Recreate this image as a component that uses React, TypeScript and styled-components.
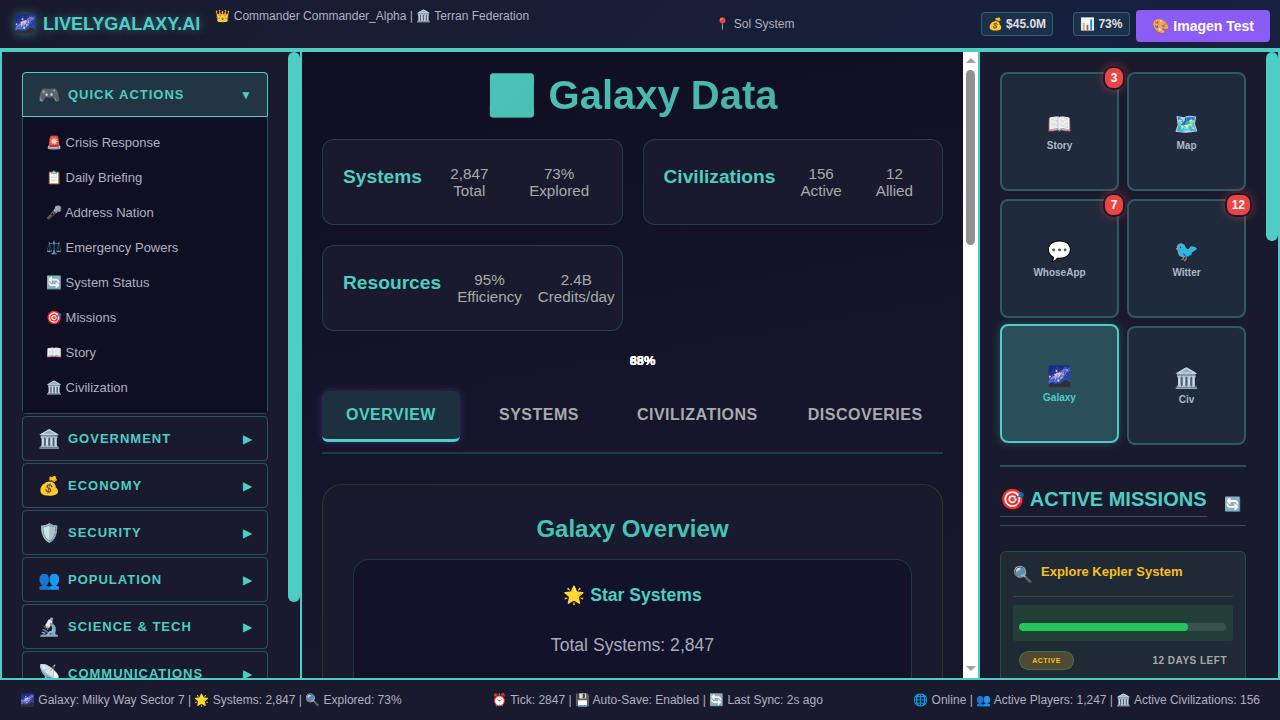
import React from 'react'
import styled, { createGlobalStyle } from 'styled-components'

const GlobalStyle = createGlobalStyle`
  * {
    box-sizing: border-box;
  }
  html, body {
    margin: 0;
    height: 100%;
    overflow: hidden;
    background: #0f0f23;
    font-family: "Liberation Sans", Arial, sans-serif;
  }
`

const Page = styled.div`
  height: 100vh;
  display: flex;
  flex-direction: column;
`

const Header = styled.header`
  flex: 0 0 52px;
  display: flex;
  align-items: center;
  justify-content: space-between;
  padding: 0 10px 0 14px;
  background: linear-gradient(135deg, #1a1a2e, #16213e);
  border-bottom: 4px solid #4ecdc4;
`

const HeaderLeft = styled.div`
  align-self: flex-start;
  display: flex;
  align-items: flex-start;
  gap: 15px;
`

const Logo = styled.div`
  display: flex;
  align-items: center;
  gap: 7px;
  height: 48px;
  font-size: 18px;
  font-weight: 700;
  color: #4ecdc4;
  text-shadow: 0 0 10px rgba(78, 205, 196, 0.5);
`

const Commander = styled.div`
  padding-top: 9px;
  font-size: 12px;
  color: #b0b0c0;
`

const Location = styled.div`
  font-size: 12px;
  color: #b0b0c0;
`

const HeaderRight = styled.div`
  display: flex;
  align-items: center;
`

const HeaderStat = styled.div`
  margin-right: 20px;
  padding: 4px 6px;
  font-size: 12px;
  font-weight: 700;
  color: #e0e0e0;
  background: rgba(78, 205, 196, 0.1);
  border: 1px solid rgba(78, 205, 196, 0.3);
  border-radius: 4px;

  &:nth-child(2) {
    margin-right: 6px;
    padding-right: 7px;
  }
`

const ImagenButton = styled.button`
  margin-top: 4px;
  height: 32px;
  padding: 0 16px;
  border: none;
  border-radius: 4px;
  font-family: inherit;
  font-size: 14px;
  font-weight: 700;
  color: #fff;
  background: #8b5cf6;
`

const Columns = styled.div`
  flex: 1;
  min-height: 0;
  display: grid;
  grid-template-columns: 302px 678px 300px;
  grid-template-rows: minmax(0, 1fr);
`

const Panel = styled.div<{ $left?: boolean }>`
  display: flex;
  min-height: 0;
  overflow: hidden;
  background: #1a1a2e;
  border-right: 2px solid #4ecdc4;
  border-left: ${(p) => (p.$left ? '2px solid #4ecdc4' : 'none')};
`

const PanelBody = styled.div`
  flex: 1;
  min-width: 0;
  overflow: hidden;
  padding: 20px;
`

const TealRail = styled.div`
  flex: 0 0 12px;
`

const TealThumb = styled.div<{ $height: number }>`
  height: ${(p) => p.$height}px;
  background: #4ecdc4;
  border-radius: 6px;
`

const NavSection = styled.div`
  margin-bottom: 2px;
  border: 1px solid rgba(78, 205, 196, 0.3);
  border-radius: 4px;
`

const NavHeader = styled.div<{ $open?: boolean }>`
  height: ${(p) => (p.$open ? '45px' : '43px')};
  margin: ${(p) => (p.$open ? '-1px -1px 0' : '0')};
  display: flex;
  align-items: center;
  padding: 0 15px;
  background: ${(p) => (p.$open ? 'rgba(78, 205, 196, 0.15)' : 'transparent')};
  border: ${(p) => (p.$open ? '1px solid #4ecdc4' : 'none')};
  border-radius: ${(p) => (p.$open ? '4px 4px 0 0' : '0')};
`

const NavIcon = styled.span`
  width: 30px;
  font-size: 18px;
`

const NavTitle = styled.span`
  flex: 1;
  font-size: 13px;
  font-weight: 700;
  letter-spacing: 1px;
  text-transform: uppercase;
  color: #4ecdc4;
`

const NavArrow = styled.span`
  font-size: 12px;
  color: #4ecdc4;
`

const NavList = styled.div`
  padding: 8px 0;
  background: #0f0f23;
`

const NavItem = styled.div`
  height: 35px;
  display: flex;
  align-items: center;
  padding-left: 23px;
  font-size: 13px;
  color: #b0b0c0;
`

const MainPanel = styled.main`
  display: flex;
  min-height: 0;
  overflow: hidden;
  border-right: 2px solid #4ecdc4;
  background: #0f0f23;
`

const MainContent = styled.div`
  flex: 1;
  min-width: 0;
  overflow: hidden;
  padding: 20px;
  background: linear-gradient(170deg, #0f0f23 0%, #15152b 60%, #17172c 100%);
`

const BrowserRail = styled.div`
  flex: 0 0 15px;
  display: flex;
  flex-direction: column;
  align-items: center;
  background: #fff;
`

const RailArrow = styled.div<{ $down?: boolean }>`
  width: 0;
  height: 0;
  margin-top: ${(p) => (p.$down ? 'auto' : '6px')};
  margin-bottom: 7px;
  border-left: 5px solid transparent;
  border-right: 5px solid transparent;
  border-bottom: ${(p) => (p.$down ? 'none' : '5px solid #a0a0a0')};
  border-top: ${(p) => (p.$down ? '5px solid #a0a0a0' : 'none')};
`

const BrowserThumb = styled.div`
  width: 9px;
  height: 175px;
  background: #909090;
  border-radius: 5px;
`

const PageTitle = styled.h1`
  margin: 0 0 20px;
  font-size: 40px;
  font-weight: 700;
  text-align: center;
  color: transparent;
  background: linear-gradient(135deg, #4ecdc4, #45a89a);
  -webkit-background-clip: text;
  background-clip: text;
`

const StatGrid = styled.div`
  display: grid;
  grid-template-columns: minmax(0, 1fr) minmax(0, 1fr);
  gap: 20px;
`

const StatCard = styled.div`
  height: 86px;
  display: flex;
  align-items: flex-start;
  padding: 20px;
  background: #191a2e;
  border: 1px solid rgba(78, 205, 196, 0.2);
  border-radius: 12px;
`

const StatTitle = styled.div`
  flex-shrink: 0;
  margin-right: 16px;
  padding-top: 6px;
  font-size: 19.2px;
  font-weight: 700;
  color: #4ecdc4;
`

const StatValues = styled.div`
  flex: 1;
  min-width: 0;
  display: flex;
  justify-content: space-around;
  gap: 16px;
`

const StatValue = styled.div`
  flex-shrink: 0;
  padding: 5px 0;
  font-size: 15.2px;
  line-height: 17px;
  text-align: center;
  color: #aaa;
`

const RingLabels = styled.div`
  position: relative;
  height: 60px;
`

const RingLabel = styled.span`
  position: absolute;
  top: 22px;
  left: calc(50% + 10px);
  transform: translateX(-50%);
  font-size: 12.8px;
  font-weight: 700;
  color: #fff;
`

const TabBar = styled.div`
  display: flex;
  padding-bottom: 10px;
  margin-bottom: 30px;
  border-bottom: 2px solid rgba(78, 205, 196, 0.2);
`

const Tab = styled.div<{ $active?: boolean; $offset: number }>`
  flex-shrink: 0;
  height: 51px;
  margin-left: ${(p) => p.$offset}px;
  padding: 0 24px;
  display: flex;
  align-items: center;
  font-size: 16px;
  font-weight: 700;
  letter-spacing: 0.5px;
  color: ${(p) => (p.$active ? '#4ecdc4' : '#aaa')};
  background: ${(p) => (p.$active ? 'rgba(78, 205, 196, 0.15)' : 'transparent')};
  border-bottom: 3px solid ${(p) => (p.$active ? '#4ecdc4' : 'transparent')};
  border-radius: 6px;
  box-shadow: ${(p) => (p.$active ? '0 0 8px rgba(139, 92, 246, 0.3)' : 'none')};
`

const OverviewPanel = styled.section`
  padding: 30px;
  background: #191a2e;
  border: 1px solid rgba(255, 215, 0, 0.12);
  border-radius: 20px;
`

const OverviewTitle = styled.h2`
  margin: 0 0 16px;
  font-size: 24px;
  font-weight: 700;
  text-align: center;
  color: #45c4b8;
`

const InfoCard = styled.div`
  min-height: 400px;
  padding: 25px 20px;
  background: #12132a;
  border: 1px solid rgba(78, 205, 196, 0.2);
  border-radius: 16px;
  text-align: center;
`

const InfoTitle = styled.h3`
  margin: 0 0 29px;
  font-size: 17.6px;
  font-weight: 700;
  color: #4ecdc4;
`

const InfoLine = styled.p`
  margin: 0;
  font-size: 17.6px;
  color: #aaaab8;
`

const TileGrid = styled.div`
  display: grid;
  grid-template-columns: 119px 119px;
  grid-auto-rows: 119px;
  gap: 8px;
  padding-bottom: 20px;
  border-bottom: 2px solid rgba(78, 205, 196, 0.3);
`

const Tile = styled.div<{ $active?: boolean }>`
  position: relative;
  display: flex;
  flex-direction: column;
  align-items: center;
  justify-content: center;
  gap: 4px;
  background: ${(p) => (p.$active ? '#2b4f5a' : '#1f2a3c')};
  border: 2px solid ${(p) => (p.$active ? '#4ecdc4' : 'rgba(78, 205, 196, 0.3)')};
  border-radius: 8px;
  box-shadow: ${(p) => (p.$active ? '0 0 10px rgba(78, 205, 196, 0.3)' : 'none')};
  transform: ${(p) => (p.$active ? 'translateY(-2px)' : 'none')};
`

const TileIcon = styled.span`
  font-size: 20px;
  line-height: 24px;
`

const TileLabel = styled.span<{ $active?: boolean }>`
  font-size: 10px;
  font-weight: 700;
  color: ${(p) => (p.$active ? '#4ecdc4' : '#b0b8c8')};
`

const Badge = styled.span`
  position: absolute;
  top: -8px;
  right: -8px;
  min-width: 22px;
  height: 24px;
  padding: 0 5px;
  display: flex;
  align-items: center;
  justify-content: center;
  font-size: 12px;
  font-weight: 700;
  color: #fff;
  background: #ef4444;
  border: 2px solid #1a1a2e;
  border-radius: 10px;
  box-shadow: 0 0 8px rgba(239, 68, 68, 0.5);
`

const MissionsHeader = styled.div`
  display: flex;
  align-items: center;
  justify-content: space-between;
  margin-top: 20px;
  padding: 0 5px 8px 0;
  margin-bottom: 25px;
  border-bottom: 1px solid rgba(78, 205, 196, 0.3);
`

const MissionsTitle = styled.h2`
  margin: 0;
  padding-bottom: 5px;
  font-size: 20px;
  font-weight: 700;
  color: #4ecdc4;
  border-bottom: 1px solid rgba(78, 205, 196, 0.3);
`

const Refresh = styled.span`
  margin-top: 3px;
  font-size: 14px;
`

const MissionCard = styled.div`
  padding: 12px;
  background: #1f2a35;
  border: 1px solid rgba(34, 197, 94, 0.25);
  border-radius: 6px;
`

const MissionTop = styled.div`
  display: flex;
  align-items: flex-start;
  gap: 8px;
  height: 33px;
  margin-bottom: 8px;
  border-bottom: 1px solid rgba(78, 205, 196, 0.2);
`

const MissionIcon = styled.span`
  font-size: 16px;
  line-height: 22px;
`

const MissionName = styled.span`
  font-size: 13px;
  font-weight: 700;
  line-height: 15px;
  color: #fbbf24;
`

const ProgressBox = styled.div`
  height: 36px;
  padding: 18px 7px 0 6px;
  background: #224038;
  border-radius: 3px;
`

const ProgressTrack = styled.div`
  height: 8px;
  background: rgba(255, 255, 255, 0.1);
  border-radius: 4px;
  overflow: hidden;
`

const ProgressFill = styled.div`
  height: 100%;
  background: #22c55e;
  border-radius: 4px;
`

const MissionFooter = styled.div`
  display: flex;
  align-items: center;
  justify-content: space-between;
  margin-top: 10px;
  padding: 0 6px;
`

const StatusPill = styled.span`
  width: 55px;
  height: 19px;
  display: flex;
  align-items: center;
  justify-content: center;
  font-size: 7px;
  font-weight: 700;
  letter-spacing: 0.5px;
  color: #fbbf24;
  background: rgba(251, 191, 36, 0.22);
  border: 1px solid rgba(34, 197, 94, 0.35);
  border-radius: 10px;
`

const DaysLeft = styled.span`
  font-size: 10px;
  font-weight: 700;
  letter-spacing: 0.5px;
  color: #a8a8a8;
`

const Footer = styled.footer`
  flex: 0 0 42px;
  display: flex;
  align-items: center;
  justify-content: space-between;
  padding: 0 20px;
  font-size: 12px;
  color: #b0b0c0;
  background: #1a1a2e;
  border-top: 2px solid #4ecdc4;
`

const quickActions = [
  '🚨 Crisis Response',
  '📋 Daily Briefing',
  '🎤 Address Nation',
  '⚖️ Emergency Powers',
  '🔄 System Status',
  '🎯 Missions',
  '📖 Story',
  '🏛️ Civilization',
]

const navSections = [
  { icon: '🏛️', title: 'Government' },
  { icon: '💰', title: 'Economy' },
  { icon: '🛡️', title: 'Security' },
  { icon: '👥', title: 'Population' },
  { icon: '🔬', title: 'Science & Tech' },
  { icon: '📡', title: 'Communications' },
]

const statCards = [
  { title: 'Systems', values: [['2,847', 'Total'], ['73%', 'Explored']] },
  { title: 'Civilizations', values: [['156', 'Active'], ['12', 'Allied']] },
  { title: 'Resources', values: [['95%', 'Efficiency'], ['2.4B', 'Credits/day']] },
]

const tabs = [
  { label: 'OVERVIEW', offset: 0, active: true },
  { label: 'SYSTEMS', offset: 15 },
  { label: 'CIVILIZATIONS', offset: 10 },
  { label: 'DISCOVERIES', offset: 2 },
]

const tiles = [
  { icon: '📖', label: 'Story', badge: '3' },
  { icon: '🗺️', label: 'Map' },
  { icon: '💬', label: 'WhoseApp', badge: '7' },
  { icon: '🐦', label: 'Witter', badge: '12' },
  { icon: '🌌', label: 'Galaxy', active: true },
  { icon: '🏛️', label: 'Civ' },
]

const App = () => {
  return (
    <Page>
      <GlobalStyle />
      <Header>
        <HeaderLeft>
          <Logo>
            <span>🌌</span>
            <span>LIVELYGALAXY.AI</span>
          </Logo>
          <Commander>👑 Commander Commander_Alpha | 🏛️ Terran Federation</Commander>
        </HeaderLeft>
        <Location>📍 Sol System</Location>
        <HeaderRight>
          <HeaderStat>💰 $45.0M</HeaderStat>
          <HeaderStat>📊 73%</HeaderStat>
          <ImagenButton>🎨 Imagen Test</ImagenButton>
        </HeaderRight>
      </Header>

      <Columns>
        <Panel $left>
          <PanelBody>
            <NavSection>
              <NavHeader $open>
                <NavIcon>🎮</NavIcon>
                <NavTitle>Quick Actions</NavTitle>
                <NavArrow>▼</NavArrow>
              </NavHeader>
              <NavList>
                {quickActions.map((item) => (
                  <NavItem key={item}>{item}</NavItem>
                ))}
              </NavList>
            </NavSection>
            {navSections.map((section) => (
              <NavSection key={section.title}>
                <NavHeader>
                  <NavIcon>{section.icon}</NavIcon>
                  <NavTitle>{section.title}</NavTitle>
                  <NavArrow>▶</NavArrow>
                </NavHeader>
              </NavSection>
            ))}
          </PanelBody>
          <TealRail>
            <TealThumb $height={550} />
          </TealRail>
        </Panel>

        <MainPanel>
          <MainContent>
            <PageTitle>🌌 Galaxy Data</PageTitle>
            <StatGrid>
              {statCards.map((card) => (
                <StatCard key={card.title}>
                  <StatTitle>{card.title}</StatTitle>
                  <StatValues>
                    {card.values.map(([value, label]) => (
                      <StatValue key={label}>
                        {value}
                        <br />
                        {label}
                      </StatValue>
                    ))}
                  </StatValues>
                </StatCard>
              ))}
            </StatGrid>
            <RingLabels>
              <RingLabel>85%</RingLabel>
              <RingLabel>68%</RingLabel>
              <RingLabel>88%</RingLabel>
            </RingLabels>
            <TabBar>
              {tabs.map((tab) => (
                <Tab key={tab.label} $active={tab.active} $offset={tab.offset}>
                  {tab.label}
                </Tab>
              ))}
            </TabBar>
            <OverviewPanel>
              <OverviewTitle>Galaxy Overview</OverviewTitle>
              <InfoCard>
                <InfoTitle>🌟 Star Systems</InfoTitle>
                <InfoLine>Total Systems: 2,847</InfoLine>
              </InfoCard>
            </OverviewPanel>
          </MainContent>
          <BrowserRail>
            <RailArrow />
            <BrowserThumb />
            <RailArrow $down />
          </BrowserRail>
        </MainPanel>

        <Panel>
          <PanelBody>
            <TileGrid>
              {tiles.map((tile) => (
                <Tile key={tile.label} $active={tile.active}>
                  <TileIcon>{tile.icon}</TileIcon>
                  <TileLabel $active={tile.active}>{tile.label}</TileLabel>
                  {tile.badge && <Badge>{tile.badge}</Badge>}
                </Tile>
              ))}
            </TileGrid>
            <MissionsHeader>
              <MissionsTitle>🎯 ACTIVE MISSIONS</MissionsTitle>
              <Refresh>🔄</Refresh>
            </MissionsHeader>
            <MissionCard>
              <MissionTop>
                <MissionIcon>🔍</MissionIcon>
                <MissionName>Explore Kepler System</MissionName>
              </MissionTop>
              <ProgressBox>
                <ProgressTrack>
                  <ProgressFill style={{ width: '81.5%' }} />
                </ProgressTrack>
              </ProgressBox>
              <MissionFooter>
                <StatusPill>ACTIVE</StatusPill>
                <DaysLeft>12 DAYS LEFT</DaysLeft>
              </MissionFooter>
            </MissionCard>
          </PanelBody>
          <TealRail>
            <TealThumb $height={189} />
          </TealRail>
        </Panel>
      </Columns>

      <Footer>
        <span>🌌 Galaxy: Milky Way Sector 7 | 🌟 Systems: 2,847 | 🔍 Explored: 73%</span>
        <span>⏰ Tick: 2847 | 💾 Auto-Save: Enabled | 🔄 Last Sync: 2s ago</span>
        <span>🌐 Online | 👥 Active Players: 1,247 | 🏛️ Active Civilizations: 156</span>
      </Footer>
    </Page>
  )
}

export default App
